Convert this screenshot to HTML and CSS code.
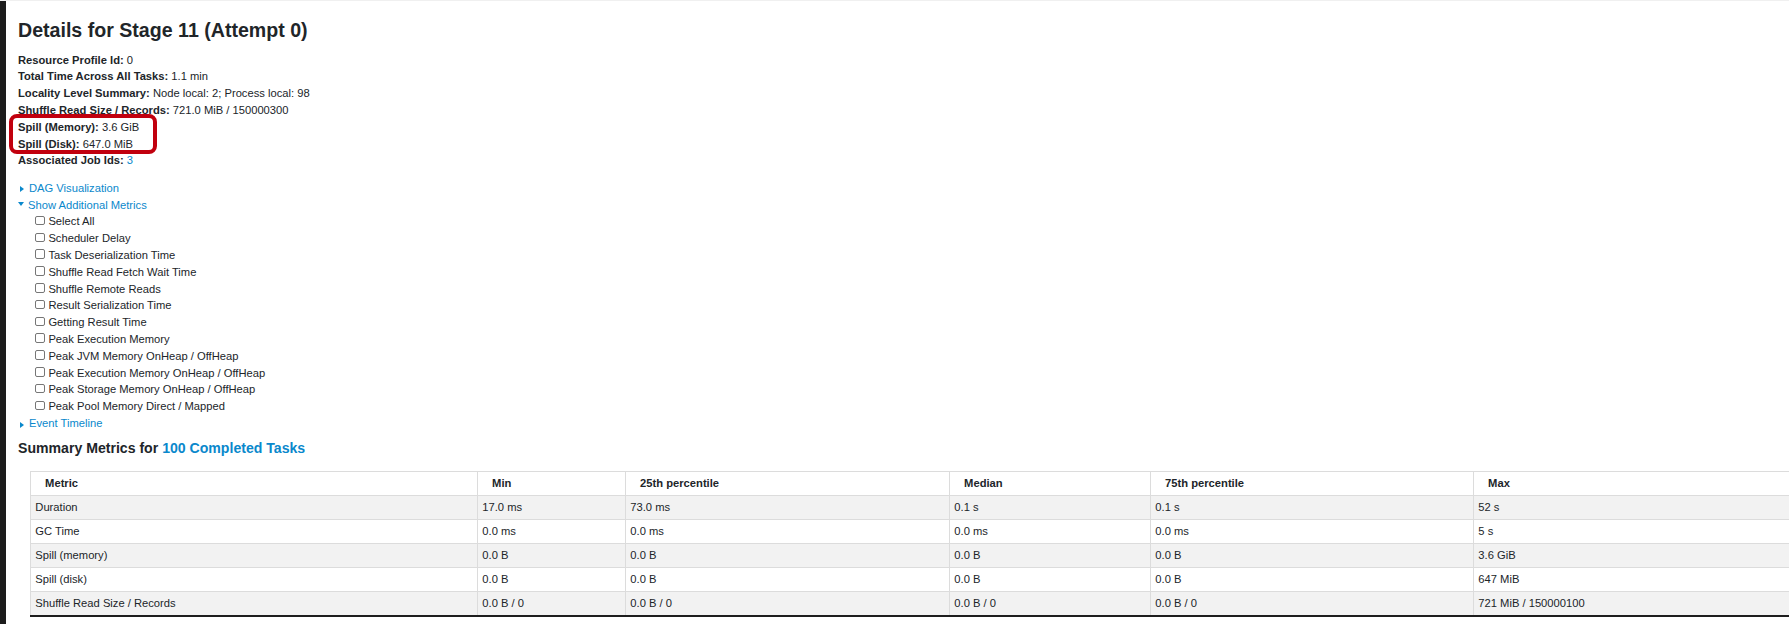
FILE: index.html
```html
<!DOCTYPE html>
<html lang="en">
<head>
    <meta charset="UTF-8">
    <meta name="viewport" content="width=device-width, initial-scale=1.0">
    <title>Details for Stage 11 (Attempt 0)</title>
    <link rel="stylesheet" href="styles.css">
</head>
<body>
    <div class="strip"></div>
    <div class="page">
        <h3>Details for Stage 11 (Attempt 0)</h3>
        <div class="stage-info">
            <ul class="details">
                <li><strong>Resource Profile Id:</strong> 0</li>
                <li><strong>Total Time Across All Tasks:</strong> 1.1 min</li>
                <li><strong>Locality Level Summary:</strong> Node local: 2; Process local: 98</li>
                <li><strong>Shuffle Read Size / Records:</strong> 721.0 MiB / 150000300</li>
                <li><strong>Spill (Memory):</strong> 3.6 GiB</li>
                <li><strong>Spill (Disk):</strong> 647.0 MiB</li>
                <li><strong>Associated Job Ids:</strong> <a href="#">3</a></li>
            </ul>
            <div class="highlight"></div>
        </div>

        <div class="toggle"><span class="arrow-closed"></span><a href="#">DAG Visualization</a></div>
        <div class="toggle"><span class="arrow-open"></span><a href="#">Show Additional Metrics</a></div>
        <ul class="metrics">
            <li><label><input type="checkbox">Select All</label></li>
            <li><label><input type="checkbox">Scheduler Delay</label></li>
            <li><label><input type="checkbox">Task Deserialization Time</label></li>
            <li><label><input type="checkbox">Shuffle Read Fetch Wait Time</label></li>
            <li><label><input type="checkbox">Shuffle Remote Reads</label></li>
            <li><label><input type="checkbox">Result Serialization Time</label></li>
            <li><label><input type="checkbox">Getting Result Time</label></li>
            <li><label><input type="checkbox">Peak Execution Memory</label></li>
            <li><label><input type="checkbox">Peak JVM Memory OnHeap / OffHeap</label></li>
            <li><label><input type="checkbox">Peak Execution Memory OnHeap / OffHeap</label></li>
            <li><label><input type="checkbox">Peak Storage Memory OnHeap / OffHeap</label></li>
            <li><label><input type="checkbox">Peak Pool Memory Direct / Mapped</label></li>
        </ul>
        <div class="toggle"><span class="arrow-closed"></span><a href="#">Event Timeline</a></div>

        <h4>Summary Metrics for <a href="#">100 Completed Tasks</a></h4>
        <table class="summary">
            <colgroup>
                <col class="c-metric">
                <col class="c-min">
                <col class="c-p25">
                <col class="c-median">
                <col class="c-p75">
                <col class="c-max">
            </colgroup>
            <thead>
                <tr><th>Metric</th><th>Min</th><th>25th percentile</th><th>Median</th><th>75th percentile</th><th>Max</th></tr>
            </thead>
            <tbody>
                <tr><td>Duration</td><td>17.0 ms</td><td>73.0 ms</td><td>0.1 s</td><td>0.1 s</td><td>52 s</td></tr>
                <tr><td>GC Time</td><td>0.0 ms</td><td>0.0 ms</td><td>0.0 ms</td><td>0.0 ms</td><td>5 s</td></tr>
                <tr><td>Spill (memory)</td><td>0.0 B</td><td>0.0 B</td><td>0.0 B</td><td>0.0 B</td><td>3.6 GiB</td></tr>
                <tr><td>Spill (disk)</td><td>0.0 B</td><td>0.0 B</td><td>0.0 B</td><td>0.0 B</td><td>647 MiB</td></tr>
                <tr><td>Shuffle Read Size / Records</td><td>0.0 B / 0</td><td>0.0 B / 0</td><td>0.0 B / 0</td><td>0.0 B / 0</td><td>721 MiB / 150000100</td></tr>
            </tbody>
        </table>
    </div>
</body>
</html>
```

FILE: styles.css
```css
html, body { height: 100%; }
body { margin: 0; display: flex; background: #fff; color: #212529; font-family: "Liberation Sans", Arial, sans-serif; font-size: 11.2px; line-height: 16.8px; border-top: 1px solid #f0f0f0; box-sizing: border-box; }
a { color: #0a88cc; text-decoration: none; }

.strip { width: 6px; flex: none; background: #1c1c1c; }
.page { flex: 1; min-width: 0; padding: 17.6px 0 0 12px; overflow: hidden; }

h3 { font-size: 19.6px; line-height: 23.4px; font-weight: bold; margin: 0 0 9.7px; }

.stage-info { position: relative; }
.details { list-style: none; margin: 0 0 10.6px; padding: 0; }
.highlight { position: absolute; left: -8.7px; top: 62.3px; width: 139.4px; height: 32px; border: 4px solid #c1000e; border-radius: 8px; }

.toggle { height: 16.8px; }
.toggle a { margin-left: 4px; }
.arrow-closed { display: inline-block; width: 0; height: 0; margin-left: 2px; border-top: 3.5px solid transparent; border-bottom: 3.5px solid transparent; border-left: 4px solid #0a88cc; vertical-align: -0.5px; }
.arrow-closed + a { margin-left: 5px; }
.arrow-open { display: inline-block; width: 0; height: 0; margin-bottom: 2px; border-left: 3.5px solid transparent; border-right: 3.5px solid transparent; border-top: 4px solid #0a88cc; vertical-align: 1px; }

.metrics { list-style: none; margin: 0; padding: 0 0 0 17px; }
.metrics li { height: 16.8px; }
.metrics input { -webkit-appearance: none; appearance: none; box-sizing: border-box; width: 9.6px; height: 9.6px; margin: 0 3.8px 0 0; border: 1px solid #767676; border-radius: 2px; background: #fff; vertical-align: baseline; }

h4 { font-size: 14.1px; line-height: 17.3px; font-weight: bold; margin: 8.6px 0 13.5px; }

.summary { table-layout: fixed; border-collapse: collapse; width: 1783px; margin-left: 12.3px; }
.summary .c-metric { width: 447px; }
.summary .c-min { width: 148px; }
.summary .c-p25 { width: 324px; }
.summary .c-median { width: 201px; }
.summary .c-p75 { width: 323px; }
.summary .c-max { width: 340px; }
.summary th, .summary td { border: 1px solid #dcdcdc; text-align: left; white-space: nowrap; line-height: 17px; padding: 3px 4px; }
.summary th { padding-left: 13.8px; font-weight: bold; }
.summary tbody tr:nth-child(odd) { background: #f2f2f2; }
.summary tbody tr:last-child td { border-bottom: 2px solid #1e1e1e; }
```
